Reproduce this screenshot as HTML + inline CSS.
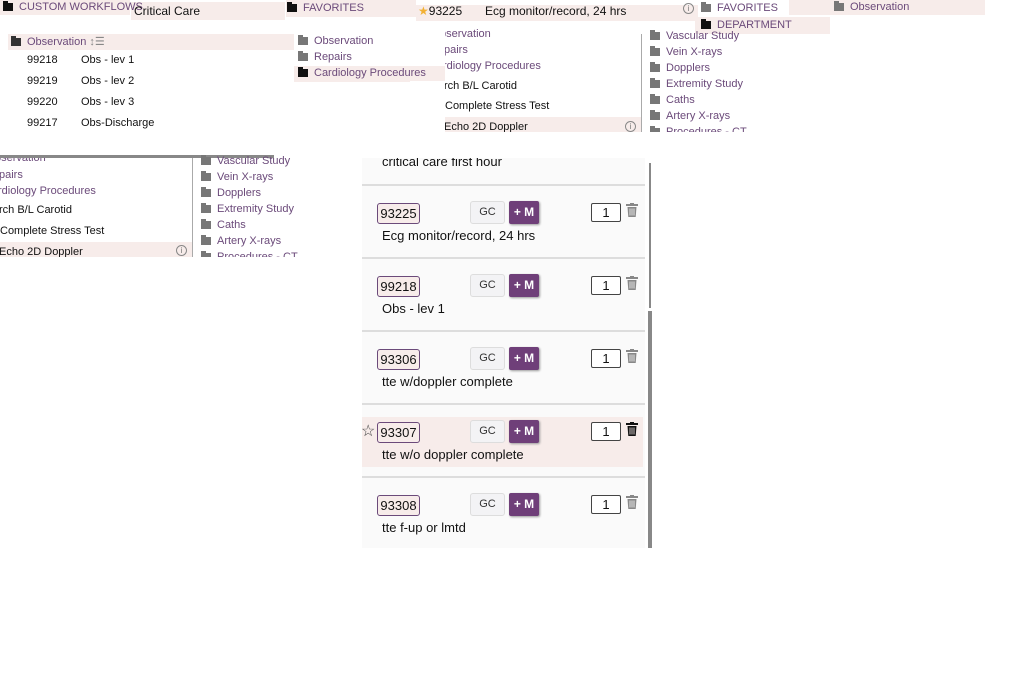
<!DOCTYPE html>
<html><head><meta charset="utf-8"><style>
*{margin:0;padding:0;box-sizing:border-box}
body{width:1034px;height:682px;background:#fff;font-family:"Liberation Sans",Arial,sans-serif;font-size:12px;color:#111;position:relative;overflow:hidden}
.a{position:absolute;white-space:nowrap}
.pk{background:#f7ecea}
.pu{color:#6b4a7a;font-size:11px}
.fd{display:inline-block;width:10px;height:8px;background:#777;position:relative;vertical-align:-1px;margin-right:6px}
.fd:before{content:"";position:absolute;left:0;top:-2px;width:5px;height:2px;background:inherit}
.fd.k{background:#111}
.card{position:absolute;left:362px;width:283px;height:71px}
.code{position:absolute;left:15px;top:13px;width:43px;height:21px;border:1px solid #6b4a7a;border-radius:3px;background:#f7ecea;font-size:13px;line-height:19px;text-align:center}
.gc{position:absolute;left:108px;top:11px;width:35px;height:23px;border:1px solid #ddd;border-radius:3px;background:#f3f3f5;font-size:11px;line-height:21px;text-align:center;color:#333}
.m{position:absolute;left:147px;top:11px;width:30px;height:23px;background:#6f3f79;color:#fff;font-weight:bold;font-size:12px;line-height:23px;text-align:center;border-radius:2px;box-shadow:1px 1px 2px #999}
.q{position:absolute;left:229px;top:13px;width:30px;height:19px;border:1px solid #444;border-radius:2px;background:#fff;font-size:13px;line-height:17px;text-align:center}
.tr{position:absolute;left:264px;top:13px;width:12px;height:14px}
.ds{position:absolute;left:20px;top:38px;font-size:13px}
.hr{position:absolute;left:362px;width:283px;height:2px;background:#ddd}
.ic{position:absolute;width:11px;height:11px;border:1px solid #888;border-radius:50%;font-size:8px;line-height:9px;text-align:center;color:#777}
</style></head><body>
<!-- backgrounds first -->
<div class="a pk" style="left:0;top:0;width:130px;height:15px"></div>
<div class="a pk" style="left:131px;top:2px;width:154px;height:18px"></div>
<div class="a pk" style="left:286px;top:0;width:130px;height:17px"></div>
<div class="a pk" style="left:416px;top:5px;width:282px;height:16px"></div>
<div class="a pk" style="left:695px;top:17px;width:135px;height:17px"></div>
<div class="a pk" style="left:789px;top:0;width:196px;height:15px"></div>
<div class="a pk" style="left:8px;top:34px;width:286px;height:16px"></div>
<div class="a pk" style="left:410px;top:66px;width:35px;height:15px"></div>
<div class="a pk" style="left:294px;top:66px;width:116px;height:16px"></div>

<!-- top row text -->
<div class="a pu" style="left:3px;top:1px"><span class="fd k"></span>CUSTOM WORKFLOWS</div>
<div class="a" style="left:134px;top:4px">Critical Care</div>
<div class="a pu" style="left:287px;top:2px"><span class="fd k"></span>FAVORITES</div>
<div class="a" style="left:418px;top:4px"><span style="color:#f2b134">★</span>93225</div>
<div class="a" style="left:485px;top:4px">Ecg monitor/record, 24 hrs</div>
<div class="ic" style="left:683px;top:3px">i</div>
<div class="a pu" style="left:701px;top:2px"><span class="fd"></span>FAVORITES</div>
<div class="a pu" style="left:701px;top:19px"><span class="fd k"></span>DEPARTMENT</div>
<div class="a pu" style="left:834px;top:1px"><span class="fd"></span>Observation</div>

<!-- observation list -->
<div class="a pu" style="left:11px;top:35px"><span class="fd k" style="background:#333"></span>Observation <span style="color:#888">↕☰</span></div>
<div class="a" style="left:27px;top:54px;font-size:11px">99218</div><div class="a" style="left:81px;top:54px;font-size:11px">Obs - lev 1</div>
<div class="a" style="left:27px;top:75px;font-size:11px">99219</div><div class="a" style="left:81px;top:75px;font-size:11px">Obs - lev 2</div>
<div class="a" style="left:27px;top:96px;font-size:11px">99220</div><div class="a" style="left:81px;top:96px;font-size:11px">Obs - lev 3</div>
<div class="a" style="left:27px;top:117px;font-size:11px">99217</div><div class="a" style="left:81px;top:117px;font-size:11px">Obs-Discharge</div>

<div class="a pu" style="left:298px;top:35px"><span class="fd"></span>Observation</div>
<div class="a pu" style="left:298px;top:51px"><span class="fd"></span>Repairs</div>
<div class="a pu" style="left:298px;top:67px"><span class="fd k"></span>Cardiology Procedures</div>

<!-- mid-top list -->
<div class="a" style="left:445px;top:26px;width:196px;height:106px;overflow:hidden">
<div class="a pu" style="left:-5px;top:2px">bservation</div>
<div class="a pu" style="left:-1px;top:18px">pairs</div>
<div class="a pu" style="left:-2px;top:34px">rdiology Procedures</div>
<div class="a" style="left:-1px;top:54px;font-size:11px">rch B/L Carotid</div>
<div class="a" style="left:0px;top:74px;font-size:11px">Complete Stress Test</div>
<div class="a pk" style="left:0;top:91px;width:196px;height:16px"></div>
<div class="a" style="left:-1px;top:95px;font-size:11px">Echo 2D Doppler</div>
<div class="ic" style="left:180px;top:95px">i</div>
</div>
<div class="a" style="left:641px;top:34px;width:1px;height:98px;background:#aaa"></div>
<div class="a" style="left:642px;top:26px;width:130px;height:106px;overflow:hidden">
<div class="a pu" style="left:8px;top:4px"><span class="fd"></span>Vascular Study</div>
<div class="a pu" style="left:8px;top:20px"><span class="fd"></span>Vein X-rays</div>
<div class="a pu" style="left:8px;top:36px"><span class="fd"></span>Dopplers</div>
<div class="a pu" style="left:8px;top:52px"><span class="fd"></span>Extremity Study</div>
<div class="a pu" style="left:8px;top:68px"><span class="fd"></span>Caths</div>
<div class="a pu" style="left:8px;top:84px"><span class="fd"></span>Artery X-rays</div>
<div class="a pu" style="left:8px;top:100px"><span class="fd"></span>Procedures - CT</div>
</div>

<!-- left lower -->
<div class="a" style="left:0;top:155px;width:274px;height:3px;background:#888"></div>
<div class="a" style="left:0;top:158px;width:192px;height:99px;overflow:hidden">
<div class="a pu" style="left:-5px;top:-6px">bservation</div>
<div class="a pu" style="left:-1px;top:11px">pairs</div>
<div class="a pu" style="left:-2px;top:27px">rdiology Procedures</div>
<div class="a" style="left:-1px;top:46px;font-size:11px">rch B/L Carotid</div>
<div class="a" style="left:0px;top:67px;font-size:11px">Complete Stress Test</div>
<div class="a pk" style="left:0;top:84px;width:192px;height:16px"></div>
<div class="a" style="left:-1px;top:88px;font-size:11px">Echo 2D Doppler</div>
<div class="ic" style="left:176px;top:87px">i</div>
</div>
<div class="a" style="left:192px;top:158px;width:1px;height:99px;background:#aaa"></div>
<div class="a" style="left:193px;top:150px;width:110px;height:107px;overflow:hidden">
<div class="a pu" style="left:8px;top:5px"><span class="fd"></span>Vascular Study</div>
<div class="a pu" style="left:8px;top:21px"><span class="fd"></span>Vein X-rays</div>
<div class="a pu" style="left:8px;top:37px"><span class="fd"></span>Dopplers</div>
<div class="a pu" style="left:8px;top:53px"><span class="fd"></span>Extremity Study</div>
<div class="a pu" style="left:8px;top:69px"><span class="fd"></span>Caths</div>
<div class="a pu" style="left:8px;top:85px"><span class="fd"></span>Artery X-rays</div>
<div class="a pu" style="left:8px;top:101px"><span class="fd"></span>Procedures - CT</div>
</div>

<!-- cards panel -->
<div class="a" style="left:362px;top:158px;width:283px;height:390px;background:#fafafa;overflow:hidden">
<div class="a" style="left:20px;top:-4px;font-size:13px">critical care first hour</div>
</div>
<div class="a" style="left:649px;top:163px;width:2px;height:145px;background:#888"></div>
<div class="a" style="left:648px;top:311px;width:4px;height:237px;background:#888"></div>
<div class="hr" style="top:184px"></div>
<div class="hr" style="top:257px"></div>
<div class="hr" style="top:330px"></div>
<div class="hr" style="top:403px"></div>
<div class="hr" style="top:476px"></div>

<div class="card" style="top:190px"><div class="code">93225</div><div class="gc">GC</div><div class="m">+ M</div><div class="q">1</div>
<svg class="tr" viewBox="0 0 12 14"><rect x="0" y="1" width="12" height="2" fill="#888"/><rect x="4" y="0" width="4" height="2" fill="#888"/><path d="M1.5 4h9l-.8 10H2.3z" fill="#888"/><path d="M4 5.5v7M6 5.5v7M8 5.5v7" stroke="#fafafa" stroke-width=".8"/></svg>
<div class="ds">Ecg monitor/record, 24 hrs</div></div>
<div class="card" style="top:263px"><div class="code">99218</div><div class="gc">GC</div><div class="m">+ M</div><div class="q">1</div>
<svg class="tr" viewBox="0 0 12 14"><rect x="0" y="1" width="12" height="2" fill="#888"/><rect x="4" y="0" width="4" height="2" fill="#888"/><path d="M1.5 4h9l-.8 10H2.3z" fill="#888"/><path d="M4 5.5v7M6 5.5v7M8 5.5v7" stroke="#fafafa" stroke-width=".8"/></svg>
<div class="ds">Obs - lev 1</div></div>
<div class="card" style="top:336px"><div class="code">93306</div><div class="gc">GC</div><div class="m">+ M</div><div class="q">1</div>
<svg class="tr" viewBox="0 0 12 14"><rect x="0" y="1" width="12" height="2" fill="#888"/><rect x="4" y="0" width="4" height="2" fill="#888"/><path d="M1.5 4h9l-.8 10H2.3z" fill="#888"/><path d="M4 5.5v7M6 5.5v7M8 5.5v7" stroke="#fafafa" stroke-width=".8"/></svg>
<div class="ds">tte w/doppler complete</div></div>
<div class="card pk" style="top:417px;height:50px;width:281px"></div>
<div class="card" style="top:409px"><div class="a" style="left:-1px;top:12px;font-size:16px;color:#444">☆</div><div class="code">93307</div><div class="gc">GC</div><div class="m">+ M</div><div class="q">1</div>
<svg class="tr" viewBox="0 0 12 14"><rect x="0" y="1" width="12" height="2" fill="#111"/><rect x="4" y="0" width="4" height="2" fill="#111"/><path d="M1.5 4h9l-.8 10H2.3z" fill="#111"/><path d="M4 5.5v7M6 5.5v7M8 5.5v7" stroke="#f7ecea" stroke-width=".8"/></svg>
<div class="ds">tte w/o doppler complete</div></div>
<div class="card" style="top:482px"><div class="code">93308</div><div class="gc">GC</div><div class="m">+ M</div><div class="q">1</div>
<svg class="tr" viewBox="0 0 12 14"><rect x="0" y="1" width="12" height="2" fill="#888"/><rect x="4" y="0" width="4" height="2" fill="#888"/><path d="M1.5 4h9l-.8 10H2.3z" fill="#888"/><path d="M4 5.5v7M6 5.5v7M8 5.5v7" stroke="#fafafa" stroke-width=".8"/></svg>
<div class="ds">tte f-up or lmtd</div></div>
</body></html>
